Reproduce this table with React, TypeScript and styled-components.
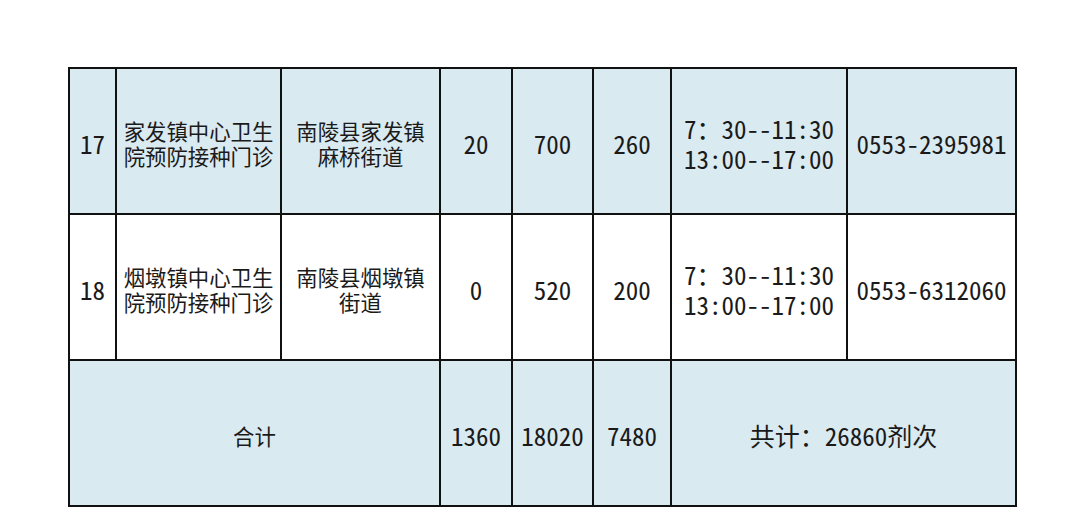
import React from "react";
import styled, { createGlobalStyle } from "styled-components";

const Global = createGlobalStyle`
  html, body { margin: 0; padding: 0; background: #ffffff; }
  body { font-family: "Noto Sans CJK SC", "Noto Sans", sans-serif; color: #111; }
`;

const Page = styled.div`
  width: 1080px;
  height: 521px;
  padding: 67px 0 0 68px;
  box-sizing: border-box;
`;

const Table = styled.table`
  border-collapse: collapse;
  table-layout: fixed;
  width: 947px;
`;

const Row = styled.tr<{ $shaded?: boolean }>`
  height: 146px;
  background: ${(p) => (p.$shaded ? "#daeaf1" : "#ffffff")};
`;

const Cell = styled.td<{ $mono?: boolean }>`
  border: 2px solid #111;
  padding: 4px 0 0;
  text-align: center;
  vertical-align: middle;
  white-space: nowrap;
  color: #1a1a1a;
  font-family: ${(p) =>
    p.$mono
      ? `"Noto Sans Mono CJK SC", "Noto Sans CJK SC", monospace`
      : `"Noto Sans CJK SC", sans-serif`};
  font-weight: ${(p) => (p.$mono ? 300 : 400)};
  font-size: ${(p) => (p.$mono ? "25px" : "21.4px")};
  line-height: ${(p) => (p.$mono ? "30px" : "25px")};
`;

const Line = styled.div``;

const cols = [47, 165, 159, 72, 81, 78, 176, 169];

const rows = [
  {
    no: "17",
    name: ["家发镇中心卫生", "院预防接种门诊"],
    addr: ["南陵县家发镇", "麻桥街道"],
    a: "20",
    b: "700",
    c: "260",
    phone: "0553-2395981",
    shaded: true,
  },
  {
    no: "18",
    name: ["烟墩镇中心卫生", "院预防接种门诊"],
    addr: ["南陵县烟墩镇", "街道"],
    a: "0",
    b: "520",
    c: "200",
    phone: "0553-6312060",
    shaded: false,
  },
];

export default function App() {
  return (
    <Page>
      <Global />
      <Table>
        <colgroup>
          {cols.map((w, i) => (
            <col key={i} style={{ width: w }} />
          ))}
        </colgroup>
        <tbody>
          {rows.map((r) => (
            <Row key={r.no} $shaded={r.shaded}>
              <Cell $mono>{r.no}</Cell>
              <Cell>
                {r.name.map((l) => (
                  <Line key={l}>{l}</Line>
                ))}
              </Cell>
              <Cell>
                {r.addr.map((l) => (
                  <Line key={l}>{l}</Line>
                ))}
              </Cell>
              <Cell $mono>{r.a}</Cell>
              <Cell $mono>{r.b}</Cell>
              <Cell $mono>{r.c}</Cell>
              <Cell $mono>
                <Line>7：30--11:30</Line>
                <Line>13:00--17:00</Line>
              </Cell>
              <Cell $mono>{r.phone}</Cell>
            </Row>
          ))}
          <Row $shaded>
            <Cell colSpan={3}>合计</Cell>
            <Cell $mono>1360</Cell>
            <Cell $mono>18020</Cell>
            <Cell $mono>7480</Cell>
            <Cell $mono colSpan={2}>共计：26860剂次</Cell>
          </Row>
        </tbody>
      </Table>
    </Page>
  );
}
